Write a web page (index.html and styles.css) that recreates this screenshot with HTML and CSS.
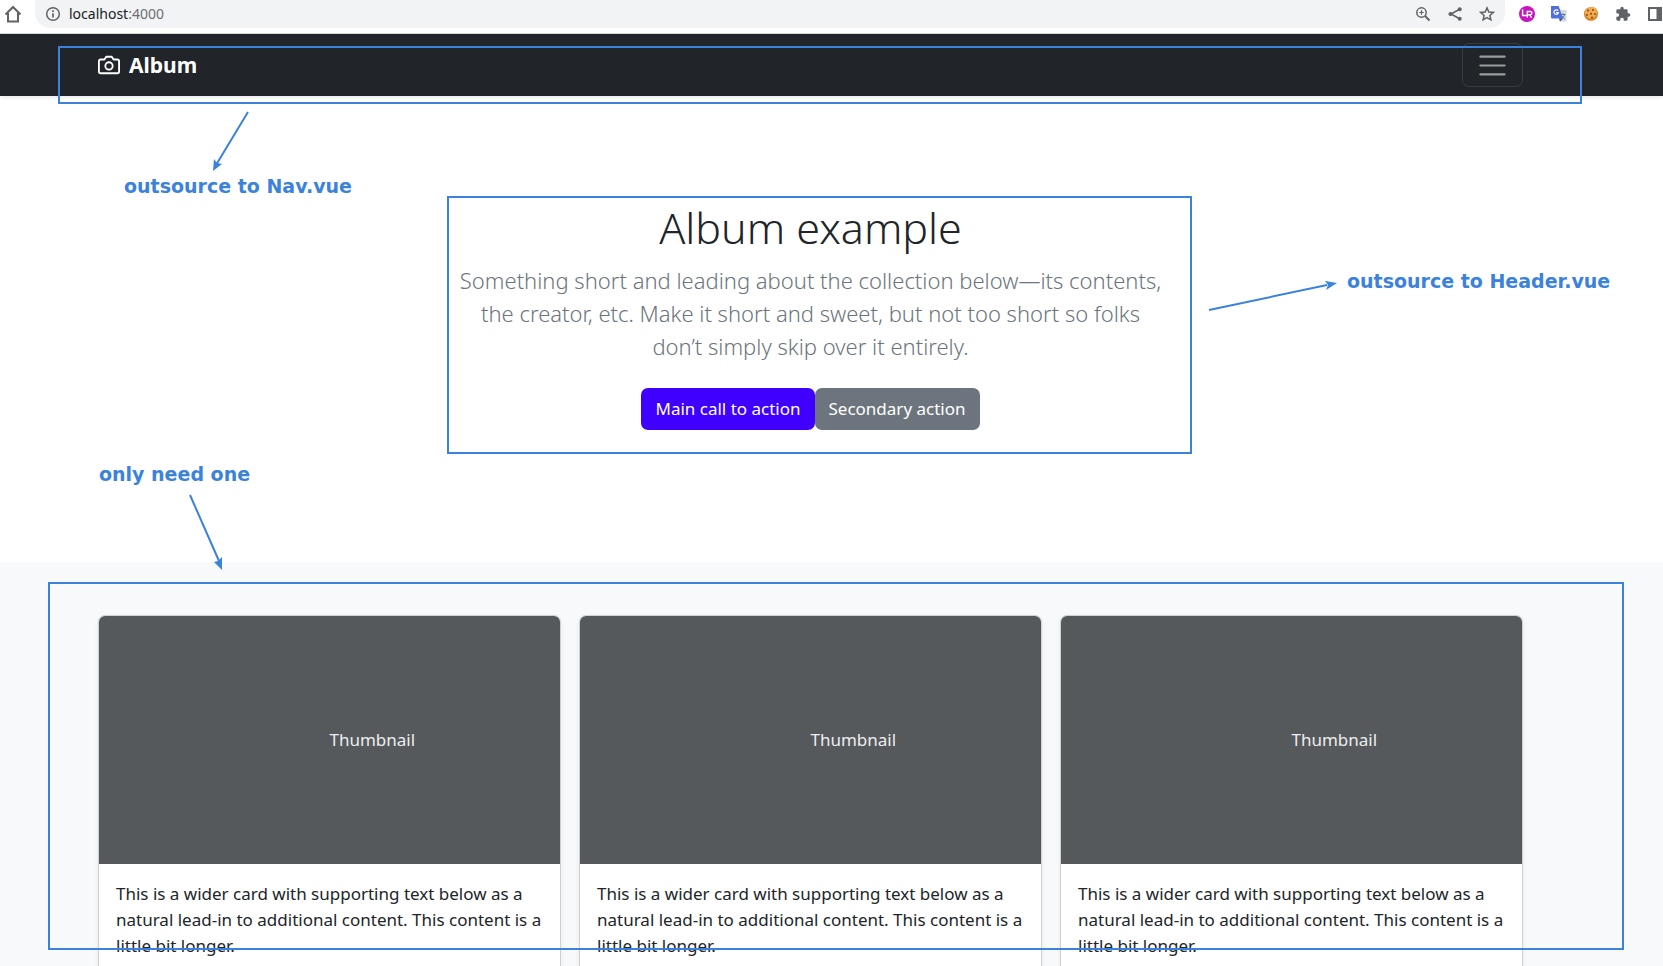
FILE: index.html
```html
<!DOCTYPE html>
<html lang="en">
<head>
<meta charset="utf-8">
<title>Album example</title>
<link rel="stylesheet" href="styles.css">
</head>
<body>
<div class="screen">
  <div class="browser-bar">
    <button class="bar-button" aria-label="Home"><svg width="20" height="20" viewBox="0 0 20 20" fill="none" stroke="#5f6368" stroke-width="2"><path d="M2.500 10.500 10 3l7.500 7.500M5 9v8.500h10V9"/></svg></button>
    <div class="address">
      <svg width="16" height="16" viewBox="0 0 16 16" fill="none" stroke="#5f6368" stroke-width="1.500"><circle cx="8" cy="8" r="6.300"/><path d="M8 7.200v4.200M8 4.300v1.600" stroke-width="1.700"/></svg>
      <span class="url">localhost<span class="port">:4000</span></span>
      <div class="address-actions">
        <button class="bar-button" aria-label="Zoom"><svg width="16" height="16" viewBox="0 0 16 16" fill="none" stroke="#5f6368" stroke-width="1.500"><circle cx="6.500" cy="6.500" r="4.700"/><path d="M10 10l4.500 4.500" stroke-width="2"/><path d="M6.500 4.300v4.400M4.300 6.500h4.400" stroke-width="1.200"/></svg></button>
        <button class="bar-button" aria-label="Share"><svg width="16" height="16" viewBox="0 0 16 16" fill="#5f6368"><path d="M13 3 4 8l9 5" fill="none" stroke="#5f6368" stroke-width="1.500"/><circle cx="12.700" cy="3.200" r="2"/><circle cx="3.500" cy="8" r="2.100"/><circle cx="12.700" cy="12.800" r="2"/></svg></button>
        <button class="bar-button" aria-label="Bookmark"><svg width="16" height="16" viewBox="0 0 16 16" fill="none" stroke="#5f6368" stroke-width="1.500"><path d="M8 1.900 9.800 6l4.500.400-3.400 3 1 4.400L8 11.500l-3.900 2.300 1-4.400-3.400-3L6.200 6z"/></svg></button>
      </div>
    </div>
    <div class="extensions">
      <button class="bar-button" aria-label="LR extension"><svg width="16" height="16" viewBox="0 0 16 16"><circle cx="8" cy="8" r="8" fill="#c916c3"/><path d="M3.600 3.500v6h4M8.300 11.500v-6h3a1.500 1.500 0 0 1 0 3.200h-3M10.500 8.700l2 3" fill="none" stroke="#fff" stroke-width="1.400"/></svg></button>
      <button class="bar-button" aria-label="Translate"><svg width="16" height="16" viewBox="0 0 16 16"><path d="M7 4h8.500v11.500H9z" fill="#d5d8de"/><path d="M9.500 8.500h5M12 7.300v1.200M13.700 8.500c-.6 2-2 3.600-3.600 4.500M10.800 9.800c.7 1.400 1.700 2.400 3 3.200" fill="none" stroke="#607d8b"/><path d="M0 0h7.700L12 12.500H1a1 1 0 0 1-1-1z" fill="#4f6fe0"/><path d="M12 12.500 9 15.500l-1-3z" fill="#3445a8"/><path d="M7 4.900A2.200 2.200 0 1 0 7.300 6.600H5.200" fill="none" stroke="#fff" stroke-width="1.200"/></svg></button>
      <button class="bar-button" aria-label="Cookies"><svg width="16" height="16" viewBox="0 0 16 16"><path d="M8 1c4-.5 7 2.700 7 6.500 0 4.200-2.800 7.300-7 7.300S1 11.600 1 7.700 4 1.500 8 1z" fill="#d9852b"/><path d="M8 1c3.500-.300 6 2 6 5.300 0 3.500-2.600 6-6 6s-6-2.300-6-5.300S4.500 1.300 8 1z" fill="#f2ab4d"/><g fill="#86401b"><circle cx="5" cy="4.500" r="1"/><circle cx="10" cy="4" r=".9"/><circle cx="8" cy="7.700" r="1"/><circle cx="12" cy="8" r=".9"/><circle cx="4" cy="9" r=".9"/><circle cx="9" cy="11.500" r="1"/></g></svg></button>
      <button class="bar-button" aria-label="Extensions"><svg width="16" height="16" viewBox="0 0 24 24" fill="#5f6368"><path d="M20.500 11H19V7a2 2 0 0 0-2-2h-4V3.500a2.500 2.500 0 0 0-5 0V5H4a2 2 0 0 0-2 2v3.800h1.500a2.700 2.700 0 0 1 0 5.400H2V20c0 1.100.9 2 2 2h3.800v-1.500a2.700 2.700 0 0 1 5.400 0V22H17a2 2 0 0 0 2-2v-4h1.500a2.500 2.500 0 0 0 0-5z"/></svg></button>
      <button class="bar-button" aria-label="Side panel"><svg width="16" height="16" viewBox="0 0 16 16"><path d="M1 1h14v14H1z" fill="#5f6368"/><path d="M3 3h6.500v10H3z" fill="#fff"/></svg></button>
    </div>
  </div>

  <nav class="navbar">
    <a class="brand" href="#"><svg width="22" height="22" viewBox="0 0 24 24" fill="none" stroke="currentColor" stroke-width="2" stroke-linecap="round" stroke-linejoin="round"><path d="M23 19a2 2 0 0 1-2 2H3a2 2 0 0 1-2-2V8a2 2 0 0 1 2-2h4l2-3h6l2 3h4a2 2 0 0 1 2 2z"/><circle cx="12" cy="13" r="4"/></svg>Album</a>
    <button class="toggler" aria-label="Toggle navigation"><svg width="33" height="33" viewBox="0 0 30 30" stroke="#fff" stroke-opacity=".55" stroke-linecap="round" stroke-width="2"><path d="M4 7h22M4 15h22M4 23h22"/></svg></button>
  </nav>

  <header class="hero">
    <h1>Album example</h1>
    <p>Something short and leading about the collection below—its contents, the creator, etc. Make it short and sweet, but not too short so folks don’t simply skip over it entirely.</p>
    <div class="actions"><a class="btn primary" href="#">Main call to action</a><a class="btn secondary" href="#">Secondary action</a></div>
  </header>

  <main class="album">
    <article class="card"><div class="thumb"><span>Thumbnail</span></div><p>This is a wider card with supporting text below as a natural lead-in to additional content. This content is a little bit longer.</p></article>
    <article class="card"><div class="thumb"><span>Thumbnail</span></div><p>This is a wider card with supporting text below as a natural lead-in to additional content. This content is a little bit longer.</p></article>
    <article class="card"><div class="thumb"><span>Thumbnail</span></div><p>This is a wider card with supporting text below as a natural lead-in to additional content. This content is a little bit longer.</p></article>
  </main>

  <div class="notes">
    <svg class="marks" width="1663" height="966" viewBox="0 0 1663 966" fill="none" stroke="#3b82dc" stroke-width="2">
      <path d="M59 47h1522v56H59zM448 197h743v256H448zM49 583h1574v366H49z"/>
      <path d="M248 112 216 165M1209 310l118-25M190 495l29 66"/>
      <g fill="#3b82dc" stroke="none"><path d="m213 171 1-12 3 4 5 1z"/><path d="m1337 283-12-2 3 4-2 5z"/><path d="m222 570-8-8 4-1 4-4z"/></g>
    </svg>
    <span class="note note-nav">outsource to Nav.vue</span>
    <span class="note note-header">outsource to Header.vue</span>
    <span class="note note-cards">only need one</span>
  </div>
</div>
</body>
</html>
```
FILE: styles.css
```css
* { box-sizing: border-box; }
body { margin: 0; background: #fff; color: #212529; font-family: "Noto Sans", "Open Sans", sans-serif; font-size: 17px; line-height: 26px; }
button { font: inherit; }
svg { display: block; flex: none; }
.screen { position: relative; height: 100vh; overflow: hidden; }

.browser-bar { display: flex; align-items: flex-start; height: 34px; padding-left: 3px; border-bottom: 1px solid #d5dcd8; overflow: hidden; }
.bar-button { display: flex; align-items: center; justify-content: center; height: 28px; padding: 0; border: 0; background: none; }
.address { display: flex; flex: 1; align-items: center; gap: 8px; height: 28px; margin-left: 12px; padding: 0 10px; border-radius: 0 0 15px 15px; background: #f1f3f4; }
.url { font-size: 14px; line-height: 28px; color: #202124; }
.port { color: #6b6f73; }
.address-actions { display: flex; gap: 16px; margin-left: auto; }
.extensions { display: flex; gap: 16px; padding-left: 14px; }

.navbar { position: relative; display: flex; align-items: center; justify-content: space-between; height: 62px; padding: 0 140px 0 98px; background: #212529; box-shadow: 0 2px 4px rgba(0, 0, 0, .08); }
.brand { display: flex; align-items: center; gap: 9px; color: #fff; font-size: 21px; font-weight: 700; text-decoration: none; }
.toggler { display: flex; align-items: center; justify-content: center; width: 61px; height: 44px; padding: 0; border: 1px solid rgba(255, 255, 255, .1); border-radius: 7px; background: none; }

.hero { display: flex; flex-direction: column; align-items: center; height: 466px; padding: 105px 42px 0 0; text-align: center; }
.hero h1 { margin: 0 0 10px; font-size: 43px; font-weight: 300; line-height: 53px; }
.hero p { max-width: 710px; margin: 0 0 25px; color: #6c757d; font-size: 22px; font-weight: 300; line-height: 33px; }
.actions { display: flex; }
.btn { padding: 8px 14px; border-radius: 7px; color: #fff; text-decoration: none; }
.primary { background: #3f00ff; }
.secondary { background: #6c757d; }

.album { display: grid; grid-template-columns: repeat(3, 1fr); gap: 18px; padding: 53px 140px 53px 98px; background: #f8f9fa; }
.card { overflow: hidden; border: 1px solid #cfd1d3; border-radius: 7px; background: #fff; box-shadow: 0 2px 4px rgba(0, 0, 0, .075); }
.thumb { display: flex; align-items: center; height: 248px; padding-left: 50%; background: #55595c; color: #eceeef; }
.card p { margin: 0; padding: 17px 14px 60px 17px; }

.notes { position: absolute; inset: 0; pointer-events: none; }
.marks { position: absolute; left: 0; top: 0; }
.note { position: absolute; color: #3b82dc; font-family: "DejaVu Sans", sans-serif; font-size: 19px; font-weight: 700; white-space: nowrap; }
.note-nav { left: 124px; top: 173px; }
.note-header { left: 1347px; top: 268px; }
.note-cards { left: 99px; top: 461px; }
```
